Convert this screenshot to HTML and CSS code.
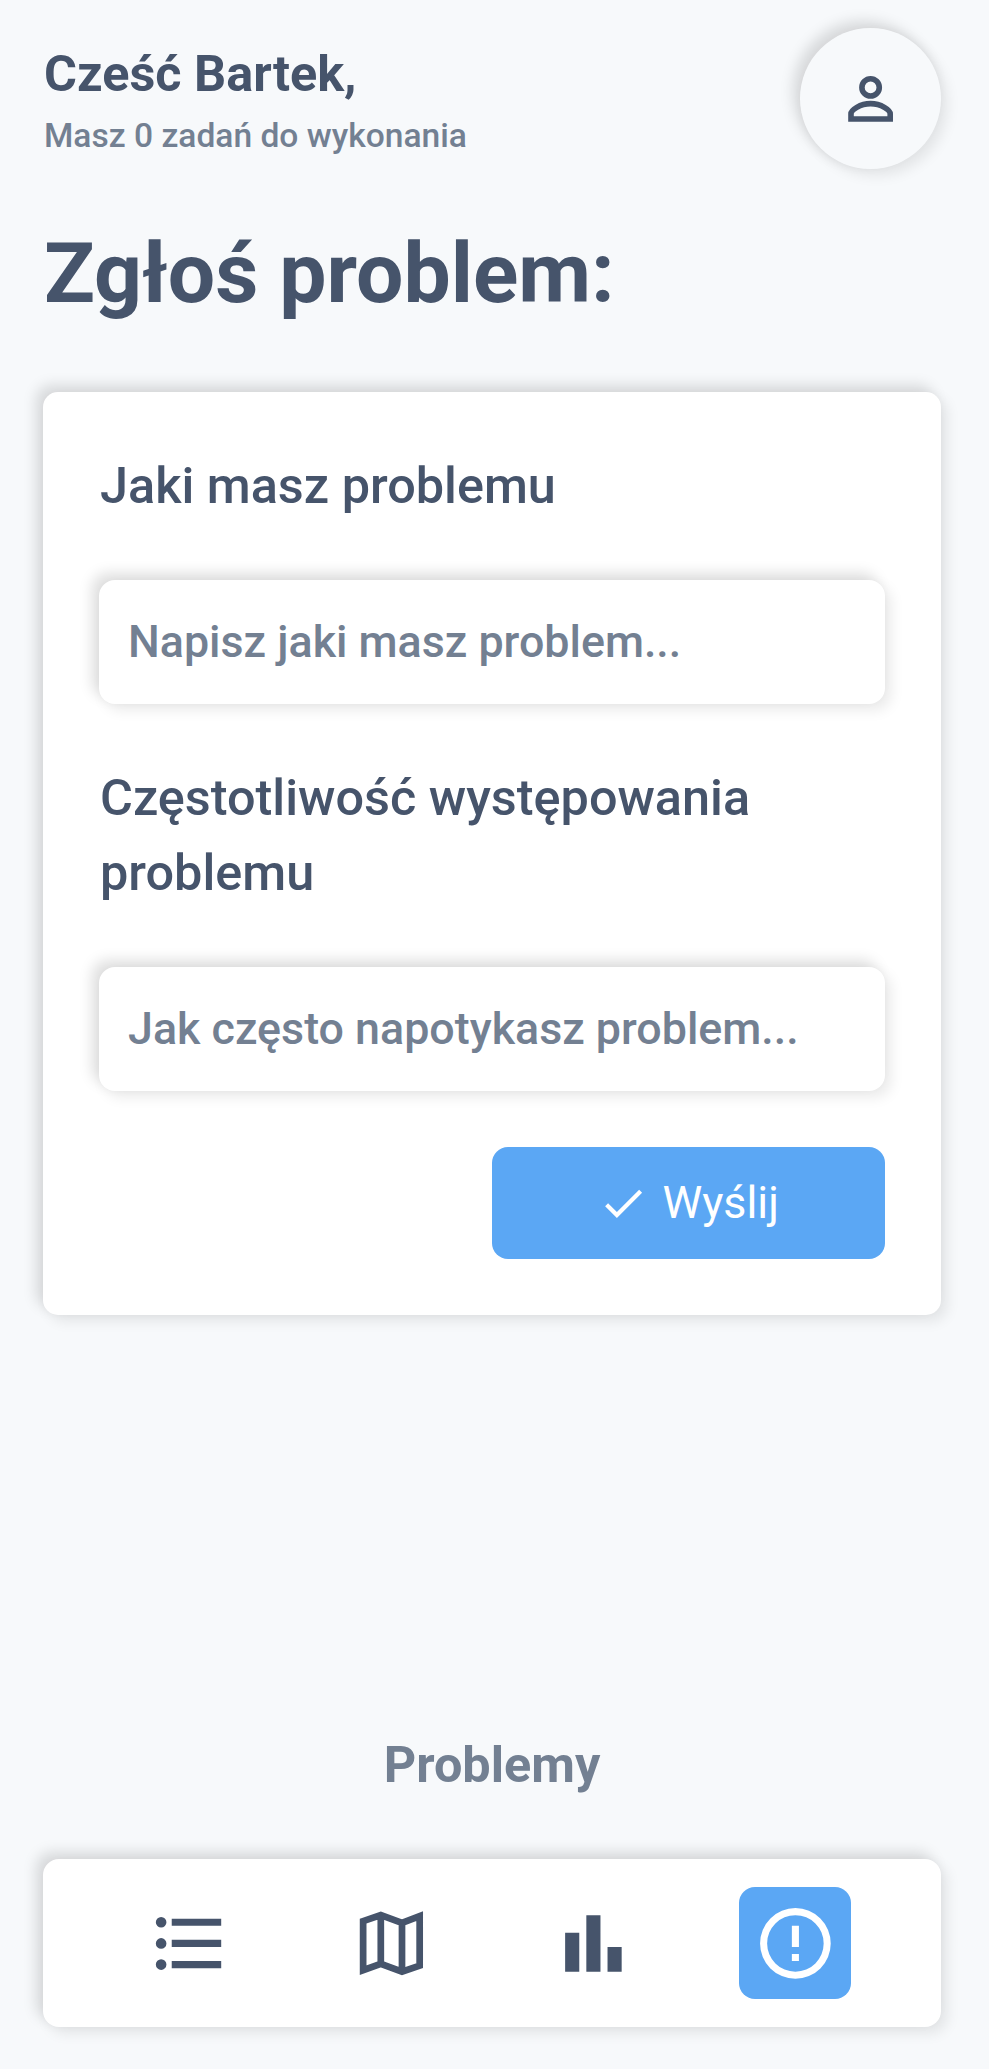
FILE: index.html
```html
<!DOCTYPE html>
<html lang="pl">
<head>
<meta charset="utf-8">
<title>Zgłoś problem</title>
<link rel="stylesheet" href="styles.css">
</head>
<body>
<div class="app">
  <header class="header">
    <div>
      <p class="greeting">Cześć Bartek,</p>
      <p class="tasks">Masz 0 zadań do wykonania</p>
    </div>
    <a class="avatar raised" aria-label="Profil">
      <svg class="avatar-icon" viewBox="0 0 24 24"><path fill="none" stroke="currentColor" stroke-width="2" d="M12 4.9a3.1 3.1 0 1 1 0 6.2 3.1 3.1 0 0 1 0-6.2zM5 19.3V17.4c0-1.3 3.2-3.6 7-3.6s7 2.3 7 3.6v1.9z"/></svg>
    </a>
  </header>
  <h1 class="title">Zgłoś problem:</h1>
  <form class="card raised">
    <label class="label" for="what">Jaki masz problemu</label>
    <input class="field raised" id="what" placeholder="Napisz jaki masz problem...">
    <label class="label" for="often">Częstotliwość występowania problemu</label>
    <input class="field raised" id="often" placeholder="Jak często napotykasz problem...">
    <button class="submit" type="button">
      <svg class="check" viewBox="0 0 24 24"><path fill="currentColor" d="M9 16.2L4.8 12l-1.4 1.4L9 19 21 7l-1.4-1.4L9 16.2z"/></svg>
      <span>Wyślij</span>
    </button>
  </form>
  <footer class="footer">
    <p class="section">Problemy</p>
    <nav class="nav raised">
      <a class="tab"><svg class="icon" viewBox="0 0 24 24"><path fill="currentColor" d="M4 10.5a1.5 1.5 0 1 0 0 3 1.5 1.5 0 0 0 0-3zm0-6a1.5 1.5 0 1 0 0 3 1.5 1.5 0 0 0 0-3zm0 12a1.5 1.5 0 1 0 0 3 1.5 1.5 0 0 0 0-3zM7 19h14v-2H7v2zm0-6h14v-2H7v2zm0-8v2h14V5H7z"/></svg></a>
      <a class="tab"><svg class="icon" viewBox="0 0 24 24"><path fill="none" stroke="currentColor" stroke-width="1.9" d="M4 5.7l5-1.7 6 2.2 5-1.9v14L15 20l-6-2.2L4 19.6zM9 4v13.8M15 6.2V20"/></svg></a>
      <a class="tab"><svg class="icon" viewBox="0 0 24 24"><path fill="currentColor" d="M4 9h4v11H4zm12 4h4v7h-4zm-6-9h4v16h-4z"/></svg></a>
      <a class="tab tab-active"><svg class="icon" viewBox="0 0 24 24"><path fill="currentColor" d="M11 15h2v2h-2zm0-8h2v6h-2zm1-5a10 10 0 1 0 0 20 10 10 0 0 0 0-20zm0 18a8 8 0 1 1 0-16 8 8 0 0 1 0 16z"/></svg></a>
    </nav>
  </footer>
</div>
</body>
</html>
```
FILE: styles.css
```css
* { box-sizing: border-box; margin: 0; padding: 0; }

body {
  background: #f7f9fb;
  color: #46546b;
  font-family: Roboto, "Noto Sans", sans-serif;
  font-size: 50.4px;
  line-height: 1.5;
}

.app {
  display: flex;
  flex-direction: column;
  height: 2069px;
  padding: 28px 48px 42px 43px;
}

.raised {
  box-shadow: -7px -7px 14px rgba(0, 0, 0, 0.13), 6px 6px 14px rgba(0, 0, 0, 0.085);
}

.header {
  display: flex;
  align-items: center;
  justify-content: space-between;
  height: 141px;
  padding-left: 1px;
}

.greeting { font-weight: 700; }

.tasks {
  color: #738092;
  font-size: 33.6px;
  font-weight: 500;
}

.avatar {
  display: flex;
  align-items: center;
  justify-content: center;
  width: 141px;
  height: 141px;
  border-radius: 50%;
}

.avatar-icon { width: 67.2px; height: 67.2px; }

.title {
  margin: 42px 0 55px;
  padding-left: 1px;
  font-size: 84px;
  font-weight: 700;
  line-height: 126px;
}

.card {
  display: flex;
  flex-direction: column;
  gap: 56px;
  padding: 56px;
  background: #fff;
  border-radius: 15px;
}

.label { padding-left: 1px; font-weight: 500; }

.field {
  width: 100%;
  height: 124px;
  padding: 0 29px;
  border: 0;
  border-radius: 16px;
  background: #fff;
  font: 500 44.8px Roboto, "Noto Sans", sans-serif;
}

.field::placeholder { color: #738092; opacity: 1; }

.submit {
  display: flex;
  align-items: center;
  justify-content: center;
  gap: 14px;
  align-self: flex-end;
  width: 393px;
  height: 112px;
  border: 0;
  border-radius: 16px;
  background: #5ba7f4;
  color: #fff;
  font: 400 44.8px Roboto, "Noto Sans", sans-serif;
}

.check { width: 50.4px; height: 50.4px; }

.footer { margin-top: auto; }

.section {
  margin-bottom: 56px;
  color: #738092;
  font-weight: 700;
  text-align: center;
}

.nav {
  display: flex;
  justify-content: space-evenly;
  padding: 28px 0;
  border-radius: 16px;
  background: #fff;
}

.tab {
  display: flex;
  align-items: center;
  justify-content: center;
  width: 112px;
  height: 112px;
  border-radius: 16px;
}

.tab-active { background: #5ba7f4; color: #fff; }

.icon { width: 84.8px; height: 84.8px; }
```
